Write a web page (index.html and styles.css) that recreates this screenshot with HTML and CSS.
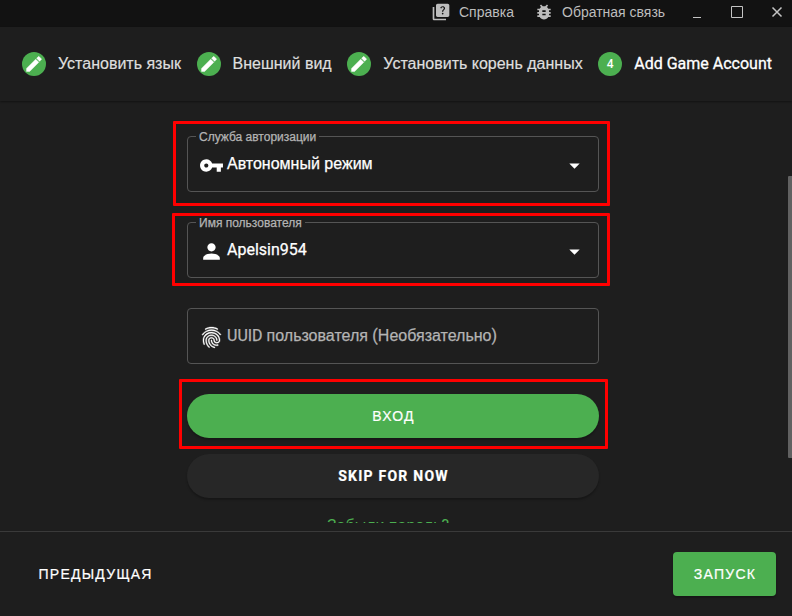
FILE: index.html
```html
<!DOCTYPE html>
<html lang="ru">
<head>
<meta charset="utf-8">
<title>Launcher</title>
<link rel="stylesheet" href="styles.css">
</head>
<body>
<svg class="defs" width="0" height="0">
  <symbol id="pencil" viewBox="0 0 24 24"><path d="M20.71,7.04C21.1,6.65 21.1,6 20.71,5.63L18.37,3.29C18,2.9 17.35,2.9 16.96,3.29L15.12,5.12L18.87,8.87M3,17.25V21H6.75L17.81,9.93L14.06,6.18L3,17.25Z"/></symbol>
  <symbol id="caret" viewBox="0 0 24 24"><path d="M7 10l5 5 5-5z"/></symbol>
</svg>
<div class="app">
  <header class="titlebar">
    <a class="link help"><svg class="icon" viewBox="0 0 24 24"><path fill-rule="evenodd" d="M4 6H2v14c0 1.100.9 2 2 2h14v-2H4V6zM20 2H8c-1.100 0-2 .9-2 2v12c0 1.100.9 2 2 2h12c1.100 0 2-.9 2-2V4c0-1.100-.9-2-2-2zM14.010 15c-.59 0-1.050-.47-1.050-1.050 0-.59.47-1.040 1.050-1.040.59 0 1.040.45 1.040 1.040-.01.58-.45 1.050-1.040 1.050zm2.500-6.170c-.63.93-1.230 1.210-1.560 1.810-.13.24-.18.4-.18 1.180h-1.520c0-.41-.06-1.080.26-1.650.41-.73 1.180-1.160 1.630-1.800.48-.68.21-1.940-1.140-1.940-.88 0-1.320.67-1.500 1.230l-1.370-.57C11.510 5.960 12.520 5 13.990 5c1.230 0 2.080.56 2.510 1.260.37.61.58 1.730.01 2.570z"/></svg><span>Справка</span></a>
    <a class="link feedback"><svg class="icon" viewBox="0 0 24 24"><path d="M20 8h-2.810c-.45-.78-1.070-1.450-1.820-1.960L17 4.410 15.590 3l-2.170 2.170C12.960 5.060 12.490 5 12 5c-.49 0-.96.06-1.410.17L8.410 3 7 4.410l1.620 1.630C7.880 6.550 7.260 7.220 6.810 8H4v2h2.090c-.05.33-.09.66-.09 1v1H4v2h2v1c0 .34.04.67.09 1H4v2h2.810c1.040 1.790 2.970 3 5.190 3s4.150-1.210 5.190-3H20v-2h-2.090c.05-.33.09-.66.09-1v-1h2v-2h-2v-1c0-.34-.04-.67-.09-1H20V8zm-6 8h-4v-2h4v2zm0-4h-4v-2h4v2z"/></svg><span>Обратная связь</span></a>
    <div class="controls">
      <svg viewBox="0 0 16 16"><path d="M4 13.500h8"/></svg>
      <svg viewBox="0 0 16 16"><path d="M2.500 2.500h11v11h-11z"/></svg>
      <svg viewBox="0 0 16 16"><path class="thick" d="M3.500 3.500l9 9M12.500 3.500l-9 9"/></svg>
    </div>
  </header>
  <nav class="stepper">
    <div class="step"><i class="badge"><svg><use href="#pencil"/></svg></i><span>Установить язык</span></div>
    <div class="step"><i class="badge"><svg><use href="#pencil"/></svg></i><span>Внешний вид</span></div>
    <div class="step"><i class="badge"><svg><use href="#pencil"/></svg></i><span>Установить корень данных</span></div>
    <div class="step active"><i class="badge">4</i><span>Add Game Account</span></div>
  </nav>
  <main class="content">
    <form class="form">
      <div class="field">
        <span class="label">Служба авторизации</span>
        <svg class="lead" viewBox="0 0 24 24"><path d="M12.650 10C11.830 7.670 9.610 6 7 6c-3.310 0-6 2.690-6 6s2.690 6 6 6c2.610 0 4.830-1.670 5.650-4H17v4h4v-4h2v-4H12.650zM7 14c-1.100 0-2-.9-2-2s.9-2 2-2 2 .9 2 2-.9 2-2 2z"/></svg>
        <span class="value">Автономный режим</span>
        <svg class="caret"><use href="#caret"/></svg>
      </div>
      <div class="field">
        <span class="label">Имя пользователя</span>
        <svg class="lead" viewBox="0 0 24 24"><path d="M12 12c2.210 0 4-1.790 4-4s-1.790-4-4-4-4 1.790-4 4 1.790 4 4 4zm0 2c-2.670 0-8 1.340-8 4v2h16v-2c0-2.660-5.330-4-8-4z"/></svg>
        <span class="value latin">Apelsin954</span>
        <svg class="caret"><use href="#caret"/></svg>
      </div>
      <div class="field">
        <svg class="lead print" viewBox="0 0 24 24"><path d="M17.81 4.47c-.08 0-.16-.02-.23-.06C15.66 3.42 14 3 12.01 3c-1.98 0-3.86.47-5.57 1.41-.24.13-.54.04-.68-.2-.13-.24-.04-.55.2-.68C7.82 2.52 9.86 2 12.01 2c2.13 0 3.99.47 6.03 1.52.25.13.34.43.21.67-.09.18-.26.28-.44.28zM3.5 9.72c-.1 0-.2-.03-.29-.09-.23-.16-.28-.47-.12-.7.99-1.4 2.25-2.5 3.75-3.27C9.98 4.04 14 4.03 17.15 5.65c1.5.77 2.76 1.86 3.75 3.25.16.22.11.54-.12.7-.23.16-.54.11-.7-.12-.9-1.26-2.04-2.25-3.39-2.94-2.87-1.47-6.54-1.47-9.4.01-1.36.7-2.5 1.7-3.4 2.96-.08.14-.23.21-.39.21zm6.25 12.07c-.13 0-.26-.05-.35-.15-.87-.87-1.34-1.43-2.01-2.64-.69-1.23-1.05-2.73-1.05-4.34 0-2.97 2.54-5.39 5.66-5.39s5.66 2.42 5.66 5.39c0 .28-.22.5-.5.5s-.5-.22-.5-.5c0-2.42-2.09-4.39-4.66-4.39-2.57 0-4.66 1.97-4.66 4.39 0 1.44.32 2.77.93 3.85.64 1.15 1.08 1.64 1.85 2.42.19.2.19.51 0 .71-.11.1-.24.15-.37.15zm7.17-1.85c-1.19 0-2.24-.3-3.1-.89-1.49-1.01-2.38-2.65-2.38-4.39 0-.28.22-.5.5-.5s.5.22.5.5c0 1.41.72 2.74 1.94 3.56.71.48 1.54.71 2.54.71.24 0 .64-.03 1.04-.1.27-.05.53.13.58.41.05.27-.13.53-.41.58-.57.11-1.07.12-1.21.12zM14.91 22c-.04 0-.09-.01-.13-.02-1.59-.44-2.63-1.03-3.72-2.1-1.4-1.39-2.17-3.24-2.17-5.22 0-1.62 1.38-2.94 3.08-2.94 1.7 0 3.08 1.32 3.08 2.94 0 1.07.93 1.94 2.08 1.94s2.08-.87 2.08-1.94c0-3.77-3.25-6.83-7.25-6.83-2.84 0-5.44 1.58-6.61 4.03-.39.81-.59 1.76-.59 2.8 0 .78.07 2.01.67 3.61.1.26-.03.55-.29.64-.26.1-.55-.04-.64-.29-.49-1.31-.73-2.61-.73-3.96 0-1.2.23-2.29.68-3.24 1.33-2.79 4.28-4.6 7.51-4.6 4.55 0 8.25 3.51 8.25 7.83 0 1.62-1.38 2.94-3.08 2.94s-3.08-1.32-3.08-2.94c0-1.07-.93-1.94-2.08-1.94s-2.08.87-2.08 1.94c0 1.71.66 3.31 1.87 4.51.95.94 1.86 1.46 3.27 1.85.27.07.42.35.35.61-.05.23-.26.38-.47.38z"/></svg>
        <span class="value hint"><b class="latin">UUID </b>пользователя <b class="latin">(</b>Необязательно<b class="latin">)</b></span>
      </div>
      <button type="button" class="pill primary"><span>ВХОД</span></button>
      <button type="button" class="pill ghost"><span>SKIP FOR NOW</span></button>
      <a class="forgot">Забыли пароль<b class="latin">?</b></a>
    </form>
    <div class="thumb"></div>
  </main>
  <footer class="footer">
    <span class="prev">ПРЕДЫДУЩАЯ</span>
    <button type="button" class="launch"><span>ЗАПУСК</span></button>
  </footer>
  <div class="mark m1"></div>
  <div class="mark m2"></div>
  <div class="mark m3"></div>
</div>
</body>
</html>
```
FILE: styles.css
```css
* { box-sizing: border-box; }
body { margin: 0; background: #1e1e1e; color: #fff; font: 16px/24px "Liberation Sans", Arial, sans-serif; }
svg { fill: currentColor; flex: none; display: block; }
button { font: inherit; border: 0; color: inherit; padding: 0; }
b { font-weight: inherit; }
.latin { font-family: Roboto, sans-serif; }
.defs { position: absolute; }
.app { position: relative; width: 792px; height: 616px; overflow: hidden; display: flex; flex-direction: column; }

.titlebar { height: 27px; flex: none; background: #121212; color: #bdbdbd; display: flex; padding-left: 431px; font-size: 14px; line-height: 24px; white-space: nowrap; }
.link { display: flex; }
.help { width: 103px; }
.link span { margin-left: 8px; }
.icon { width: 20px; height: 20px; margin-top: 2px; }
.controls { display: flex; gap: 24px; margin-left: auto; padding: 4px 7px 0 0; }
.controls svg { width: 16px; height: 16px; fill: none; stroke: #c4c4c4; }
.thick { stroke-width: 1.5; }

.stepper { height: 74px; flex: none; display: flex; align-items: center; justify-content: space-between; padding: 0 20px 0 22px; color: #dedede; box-shadow: 0 1px 2px rgba(0,0,0,.4); white-space: nowrap; -webkit-text-stroke: .2px; }
.step { display: flex; align-items: center; }
.badge { width: 24px; height: 24px; border-radius: 50%; background: #4caf50; color: #fff; display: flex; align-items: center; justify-content: center; margin-right: 12px; font: 500 12px Roboto, sans-serif; }
.badge svg { width: 20px; height: 20px; stroke: currentColor; stroke-width: .5px; }
.active { color: #fff; font-family: Roboto, sans-serif; -webkit-text-stroke: .3px; }
.active .badge { -webkit-text-stroke: 0; }

.content { height: 422px; flex: none; overflow: hidden; display: flex; justify-content: space-between; padding-left: 187px; }
.form { width: 412px; display: flex; flex-direction: column; padding-top: 35px; }
.field { position: relative; flex: none; height: 56px; margin-bottom: 30px; border: 1px solid #555; border-radius: 4px; display: flex; align-items: center; padding: 0 11px; -webkit-text-stroke: .25px; }
.label { position: absolute; left: 8px; top: -9px; padding: 0 3px; background: #1e1e1e; color: #b4b4b4; font-size: 12px; line-height: 18px; white-space: nowrap; }
.lead { width: 25px; height: 25px; margin-top: 2px; }
.print { stroke: currentColor; stroke-width: .35px; }
.value { margin: -1px auto 0 3px; white-space: nowrap; }
.hint { color: #b4b4b4; }
.caret { width: 25px; height: 25px; margin-top: 2px; }
.pill { flex: none; height: 44px; border-radius: 22px; font-size: 14px; letter-spacing: 1.25px; padding-left: 1px; margin-bottom: 16px; box-shadow: 0 2px 2px rgba(0,0,0,.25); -webkit-text-stroke: .2px; }
.primary { background: #4caf50; }
.ghost { background: #272727; font-family: Roboto, sans-serif; font-weight: 700; }
.forgot { color: #4caf50; align-self: center; margin: 0 0 0 -10px; font-size: 16px; line-height: 24px; flex: none; white-space: nowrap; }
.thumb { width: 4px; height: 282px; margin-top: 75px; background: #616161; border-radius: 1px 0 0 1px; }

.footer { margin-top: 8px; flex: 1; border-top: 1px solid #3a3a3a; display: flex; align-items: center; justify-content: space-between; padding: 0 16px 0 38.500px; font-size: 14px; letter-spacing: 1.25px; -webkit-text-stroke: .2px; }
.launch { width: 103px; height: 44px; border-radius: 4px; padding-left: 1px; background: #4caf50; letter-spacing: 1.25px; box-shadow: 0 2px 2px rgba(0,0,0,.25); }

.mark { position: absolute; border: 3px solid #f00; border-radius: 1px; }
.m1 { left: 173px; top: 121px; width: 437px; height: 85px; }
.m2 { left: 172px; top: 213px; width: 438px; height: 73px; }
.m3 { left: 179px; top: 379px; width: 429px; height: 70px; }
```
